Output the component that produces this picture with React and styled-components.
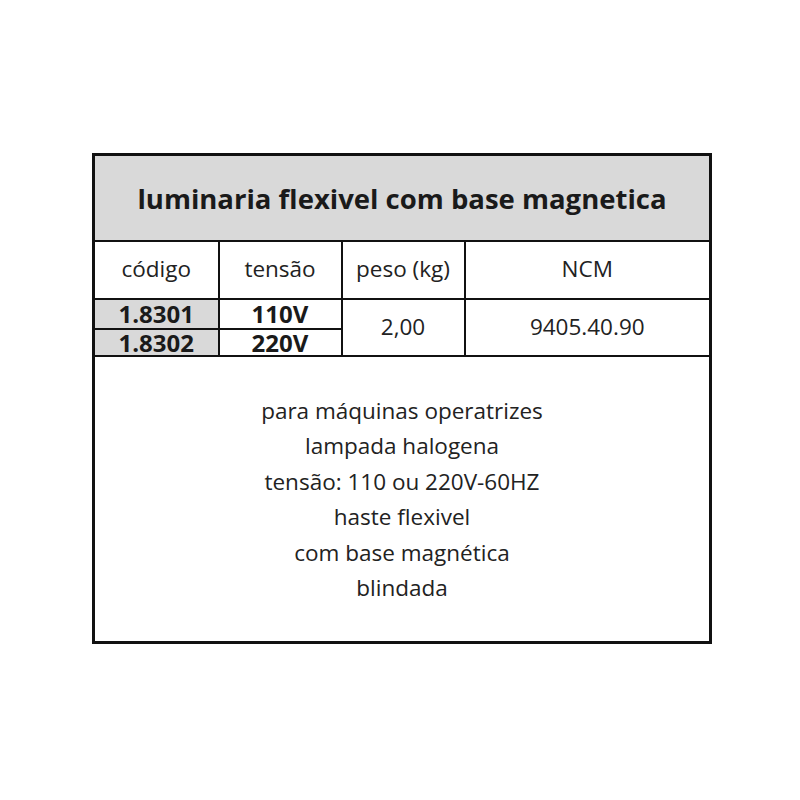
import React from "react";
import styled, { createGlobalStyle } from "styled-components";

const GlobalStyle = createGlobalStyle`
  body {
    margin: 0;
    background: #ffffff;
    font-family: "Open Sans", Lato, sans-serif;
    color: #1a1a1a;
  }
`;

const Page = styled.div`
  width: 800px;
  height: 800px;
  padding: 153px 0 0 92px;
  box-sizing: border-box;
`;

const Table = styled.table`
  width: 620px;
  border-collapse: collapse;
  border: 3px solid #111;
  table-layout: fixed;
`;

const TitleCell = styled.th`
  height: 84px;
  background: #d9d9d9;
  font-size: 27.5px;
  font-weight: 700;
  color: #1a1a1a;
  border-bottom: 2px solid #111;
  padding: 0;
`;

const HeadCell = styled.td`
  height: 54px;
  border: 2px solid #111;
  text-align: center;
  font-size: 22.5px;
  line-height: 1;
  padding: 0 0 2px;
  color: #222;
`;

const CodeCell = styled.td`
  height: ${(p) => p.$h}px;
  border: 2px solid #111;
  text-align: center;
  font-size: 24px;
  font-weight: 700;
  line-height: 1;
  padding: 0;
  background: ${(p) => (p.$shade ? "#d9d9d9" : "#fff")};
`;

const MergedCell = styled.td`
  border: 2px solid #111;
  text-align: center;
  font-size: 22.5px;
  line-height: 1;
  padding: 0;
  color: #222;
`;

const DescCell = styled.td`
  height: 284px;
  padding: 0;
  text-align: center;
  vertical-align: middle;
`;

const Line = styled.div`
  font-size: 22.5px;
  line-height: 35.5px;
  color: #222;
`;

const lines = [
  "para máquinas operatrizes",
  "lampada halogena",
  "tensão: 110 ou 220V-60HZ",
  "haste flexivel",
  "com base magnética",
  "blindada",
];

export default function App() {
  return (
    <>
      <GlobalStyle />
      <Page>
        <Table>
          <colgroup>
            <col style={{ width: 125 }} />
            <col style={{ width: 123 }} />
            <col style={{ width: 123 }} />
            <col />
          </colgroup>
          <tbody>
            <tr>
              <TitleCell colSpan={4}>luminaria flexivel com base magnetica</TitleCell>
            </tr>
            <tr>
              <HeadCell>código</HeadCell>
              <HeadCell>tensão</HeadCell>
              <HeadCell>peso (kg)</HeadCell>
              <HeadCell>NCM</HeadCell>
            </tr>
            <tr>
              <CodeCell $h={28} $shade>1.8301</CodeCell>
              <CodeCell $h={28}>110V</CodeCell>
              <MergedCell rowSpan={2}>2,00</MergedCell>
              <MergedCell rowSpan={2}>9405.40.90</MergedCell>
            </tr>
            <tr>
              <CodeCell $h={25} $shade>1.8302</CodeCell>
              <CodeCell $h={25}>220V</CodeCell>
            </tr>
            <tr>
              <DescCell colSpan={4}>
                {lines.map((l) => (
                  <Line key={l}>{l}</Line>
                ))}
              </DescCell>
            </tr>
          </tbody>
        </Table>
      </Page>
    </>
  );
}
